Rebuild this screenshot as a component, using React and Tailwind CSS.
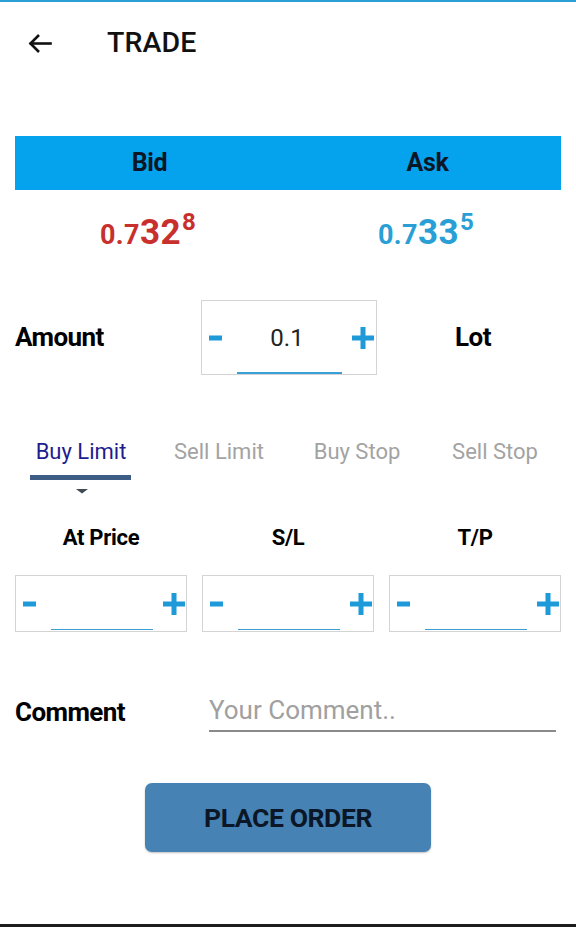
import React from "react";

const Minus = ({ w = 13 }) => (
  <svg width={w} height="6" viewBox={`0 0 ${w} 6`} className="shrink-0">
    <rect x="0" y="0.5" width={w} height="5" fill="#1e9ad8" />
  </svg>
);

const Plus = () => (
  <svg width="22" height="22" viewBox="0 0 22 22" className="shrink-0">
    <rect x="0" y="8.5" width="22" height="5" fill="#1e9ad8" />
    <rect x="8.5" y="0" width="5" height="22" fill="#1e9ad8" />
  </svg>
);

function Stepper() {
  return (
    <div className="h-[57px] border border-[#d4d4d4] flex items-center pl-[7px] pr-[1px]">
      <Minus w={13} />
      <div className="flex-1 self-end ml-[15px] mr-[10px] mb-[1px] border-b-[1.5px] border-[#3a9fd6] h-[20px]" />
      <Plus />
    </div>
  );
}

export default function App() {
  return (
    <div className="w-[576px] h-[927px] bg-white flex flex-col font-['Roboto',sans-serif] text-black relative overflow-hidden">
      <div className="h-[2px] bg-[#2a9fd6] shrink-0" />
      {/* header */}
      <div className="h-[82px] flex items-center pl-[28px] shrink-0">
        <svg width="24" height="21" viewBox="0 0 24 21" fill="none" stroke="#111" strokeWidth="2.6" strokeLinecap="square">
          <path d="M22.5 10.5H3" />
          <path d="M11 2L2.5 10.5L11 19" strokeLinecap="butt" />
        </svg>
        <span className="ml-[55px] text-[28.5px] font-medium leading-none tracking-[0.1px] text-[#111]">TRADE</span>
      </div>
      {/* bid/ask bar */}
      <div className="mt-[52px] mx-[15px] h-[54px] bg-[#05a3ee] grid grid-cols-2 items-center shrink-0">
        <div className="text-center text-[25px] font-bold text-[#0b1626] pr-[4px] tracking-[-0.3px]">Bid</div>
        <div className="text-center text-[25px] font-bold text-[#0b1626] pl-[6px] tracking-[-0.3px]">Ask</div>
      </div>
      {/* prices */}
      <div className="mx-[15px] h-[60px] grid grid-cols-2 items-end shrink-0">
        <div className="text-center font-bold text-[#c8302e] leading-none pr-[7px] tracking-[0.4px]">
          <span className="text-[27px]">0.7</span>
          <span className="text-[35px]">32</span>
          <span className="text-[24px] align-[14px] ml-[1px]">8</span>
        </div>
        <div className="text-center font-bold text-[#2a9fd6] leading-none pl-[3px] tracking-[0.4px]">
          <span className="text-[27px]">0.7</span>
          <span className="text-[35px]">33</span>
          <span className="text-[24px] align-[14px] ml-[1px]">5</span>
        </div>
      </div>
      {/* amount row */}
      <div className="mt-[50px] flex items-center h-[75px] shrink-0">
        <div className="w-[201px] pl-[15px] text-[26px] font-bold tracking-[-0.6px]">Amount</div>
        <div className="w-[176px] h-[75px] border border-[#d4d4d4] flex items-center pl-[7px] pr-[2px]">
          <Minus w={13} />
          <div className="flex-1 h-full flex items-center justify-center">
            <span className="text-[24px] text-[#222] pt-[1px]">0.1</span>
          </div>
          <Plus />
        </div>
        <div className="ml-[78px] text-[26px] font-bold tracking-[-0.5px]">Lot</div>
      </div>
      <div className="h-[2px] -mt-[3px] ml-[237px] w-[105px] bg-[#3a9fd6] shrink-0" />
      {/* tabs */}
      <div className="mt-[65px] px-[12px] grid grid-cols-4 shrink-0">
        {["Buy Limit", "Sell Limit", "Buy Stop", "Sell Stop"].map((t, i) => (
          <div key={t} className="flex flex-col items-center">
            <div className={`text-[22px] leading-[26px] ${i === 0 ? "text-[#1f1c8e]" : "text-[#a3a3a3]"}`}>{t}</div>
            {i === 0 ? (
              <>
                <div className="mt-[10px] w-[101px] h-[5px] bg-[#3d5d86] mr-[1px]" />
                <svg width="12" height="5" viewBox="0 0 12 5" className="mt-[9px] ml-[1px]">
                  <path d="M0 0H12L6 4.5Z" fill="#3f4a55" />
                </svg>
              </>
            ) : (
              <div className="h-[29px]" />
            )}
          </div>
        ))}
      </div>
      {/* labels */}
      <div className="mt-[31px] px-[15px] grid grid-cols-3 gap-[15px] shrink-0">
        {["At Price", "S/L", "T/P"].map((l) => (
          <div key={l} className="text-center text-[22px] font-bold leading-[26px] tracking-[-0.3px]">{l}</div>
        ))}
      </div>
      <div className="mt-[24px] px-[15px] grid grid-cols-3 gap-[15px] shrink-0">
        <Stepper />
        <Stepper />
        <Stepper />
      </div>
      {/* comment */}
      <div className="mt-[61px] flex items-center shrink-0">
        <div className="w-[209px] pl-[15px] text-[26px] font-bold tracking-[-0.6px]">Comment</div>
        <div className="w-[347px] border-b-[2px] border-[#8a8a8a] pb-[4px]">
          <span className="text-[26px] text-[#a0a0a0] leading-[32px]">Your Comment..</span>
        </div>
      </div>
      {/* button */}
      <div className="mt-[51px] flex justify-center shrink-0">
        <div className="w-[286px] h-[69px] rounded-[7px] bg-[#4682b4] flex items-center justify-center shadow-[0_1px_2px_rgba(0,0,0,0.25)]">
          <span className="text-[26.5px] font-bold text-[#0b1626] tracking-[-0.4px]">PLACE ORDER</span>
        </div>
      </div>
      <div className="flex-1" />
      <div className="h-[3px] bg-[#1d1d1d] shrink-0" />
    </div>
  );
}
